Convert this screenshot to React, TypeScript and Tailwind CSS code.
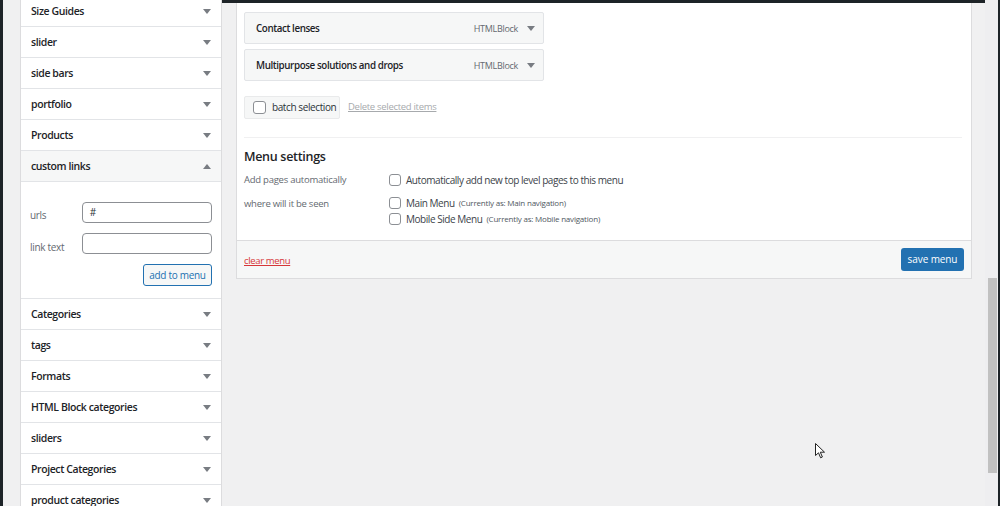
import React from "react";

const Caret = ({ up = false }: { up?: boolean }) => (
  <svg width="8" height="5" viewBox="0 0 8 5" className="shrink-0">
    {up ? <polygon points="0,5 8,5 4,0" fill="#787c82" /> : <polygon points="0,0 8,0 4,5" fill="#787c82" />}
  </svg>
);

const Box = ({ size = 12 }: { size?: number }) => (
  <span
    className="inline-block shrink-0 rounded-[3px] border border-[#8c8f94] bg-white"
    style={{ width: size, height: size }}
  />
);

const leftTop = ["Size Guides", "slider", "side bars", "portfolio", "Products"];
const leftBottom = ["Categories", "tags", "Formats", "HTML Block categories", "sliders", "Project Categories", "product categories"];

function LeftRow({ label }: { label: string }) {
  return (
    <div className="flex h-[31px] shrink-0 items-center justify-between border-b border-[#e2e4e7] pl-[10px] pr-[10px]">
      <span className="pt-[2px] text-[10.5px] font-semibold tracking-[-0.4px] text-[#1d2327]">{label}</span>
      <Caret />
    </div>
  );
}

function MenuItem({ title }: { title: string }) {
  return (
    <div className="flex h-[32px] w-[300px] items-center justify-between rounded-[2px] border border-[#e2e4e7] bg-[#f6f7f7] pl-[11px] pr-[8px]">
      <span className="pt-[2px] text-[9.8px] font-semibold tracking-[-0.4px] text-[#1d2327]">{title}</span>
      <div className="flex items-center gap-[9px]">
        <span className="pt-[1px] text-[9px] tracking-[-0.3px] text-[#646970]">HTMLBlock</span>
        <Caret />
      </div>
    </div>
  );
}

export default function App() {
  return (
    <div className="relative flex h-[506px] w-[1000px] overflow-hidden bg-[#f0f0f1] font-['Open_Sans','Noto_Sans',sans-serif]">
      <div className="w-[3px] shrink-0 bg-[#1d2327]" />
      <div className="w-[17px] shrink-0" />
      {/* left panel */}
      <div className="flex w-[202px] shrink-0 flex-col border-x border-[#dcdcde] bg-white">
        <div className="-mt-[4px] flex flex-col">
          {leftTop.map((l) => (
            <LeftRow key={l} label={l} />
          ))}
        </div>
        <div className="flex h-[31px] shrink-0 items-center justify-between border-b border-[#e2e4e7] bg-[#f6f7f7] px-[10px]">
          <span className="pt-[2px] text-[10.5px] font-semibold tracking-[-0.4px] text-[#1d2327]">custom links</span>
          <Caret up />
        </div>
        <div className="flex shrink-0 flex-col border-b border-[#e2e4e7] px-[9px] pb-[12px] pt-[20px]">
          <div className="flex h-[21px] items-center">
            <span className="w-[52px] pt-[6px] text-[10px] tracking-[-0.3px] text-[#646970]">urls</span>
            <div className="flex h-[21px] w-[131px] items-center rounded-[4px] border border-[#8c8f94] px-[7px] text-[10px] text-[#2c3338]">#</div>
          </div>
          <div className="mt-[10px] flex h-[21px] items-center">
            <span className="w-[52px] pt-[7px] text-[10px] tracking-[-0.3px] text-[#646970]">link text</span>
            <div className="h-[21px] w-[131px] rounded-[4px] border border-[#8c8f94]" />
          </div>
          <div className="mt-[10px] flex justify-end">
            <div className="flex h-[22px] w-[69px] items-center justify-center rounded-[3px] border border-[#2271b1] bg-[#f6f7f7] text-[10px] tracking-[-0.3px] text-[#2271b1]">
              add to menu
            </div>
          </div>
        </div>
        {leftBottom.map((l) => (
          <LeftRow key={l} label={l} />
        ))}
      </div>
      {/* right area */}
      <div className="flex flex-1 flex-col">
        <div className="h-[3px] shrink-0 bg-[#1d2327]" />
        <div className="flex flex-1 pl-[14px]">
          <div className="flex h-[276px] w-[736px] flex-col border-x border-b border-[#dcdcde] bg-white">
            <div className="flex flex-1 flex-col px-[7px] pt-[9px]">
              <div className="flex flex-col gap-[5px]">
                <MenuItem title="Contact lenses" />
                <MenuItem title="Multipurpose solutions and drops" />
              </div>
              <div className="mt-[15px] flex items-center">
                <div className="flex h-[23px] w-[96px] items-center gap-[6px] whitespace-nowrap rounded-[2px] border border-[#e9eaeb] bg-[#f6f7f7] px-[8px]">
                  <Box size={13} />
                  <span className="text-[10px] tracking-[-0.4px] text-[#2c3338]">batch selection</span>
                </div>
                <span className="ml-[8px] text-[9.5px] tracking-[-0.3px] text-[#a7aaad] underline">Delete selected items</span>
              </div>
              <div className="mr-[2px] mt-[18px] border-t border-[#f0f0f1]" />
              <div className="mt-[10px] text-[12.5px] font-semibold tracking-[-0.3px] text-[#1d2327]">Menu settings</div>
              <div className="mt-[6px] flex h-[15px] items-center">
                <span className="w-[145px] text-[9.5px] tracking-[-0.25px] text-[#646970]">Add pages automatically</span>
                <Box />
                <span className="ml-[5px] text-[10px] tracking-[-0.45px] text-[#3c434a]">Automatically add new top level pages to this menu</span>
              </div>
              <div className="mt-[8px] flex">
                <span className="w-[145px] text-[9.5px] leading-[15px] tracking-[-0.25px] text-[#646970]">where will it be seen</span>
                <div className="flex flex-col gap-[1px]">
                  <div className="flex h-[15px] items-center">
                    <Box />
                    <span className="ml-[5px] text-[10px] tracking-[-0.45px] text-[#3c434a]">Main Menu</span>
                    <span className="ml-[4px] text-[8px] tracking-[-0.2px] text-[#50575e]">(Currently as: Main navigation)</span>
                  </div>
                  <div className="flex h-[15px] items-center">
                    <Box />
                    <span className="ml-[5px] text-[10px] tracking-[-0.45px] text-[#3c434a]">Mobile Side Menu</span>
                    <span className="ml-[4px] text-[8px] tracking-[-0.2px] text-[#50575e]">(Currently as: Mobile navigation)</span>
                  </div>
                </div>
              </div>
            </div>
            <div className="flex h-[38px] shrink-0 items-center justify-between border-t border-[#dcdcde] bg-[#f6f7f7] pl-[7px] pr-[7px]">
              <span className="pt-[3px] text-[9.5px] tracking-[-0.35px] text-[#d63638] underline">clear menu</span>
              <div className="flex h-[23px] w-[63px] items-center justify-center rounded-[3px] bg-[#2271b1] text-[10px] tracking-[-0.1px] text-white">
                save menu
              </div>
            </div>
          </div>
        </div>
      </div>
      {/* scrollbar */}
      <div className="flex w-[13px] shrink-0 flex-col bg-[#eeeef0] pl-[3px] pr-[1px]">
        <div className="h-[278px]" />
        <div className="h-[195px] bg-[#c1c1c1]" />
      </div>
      <div className="w-[2px] shrink-0 bg-[#1d2327]" />
      {/* mouse cursor */}
      <svg className="absolute left-[815px] top-[443px]" width="11" height="16" viewBox="0 0 11 16">
        <path d="M0.5 0.5 L0.5 12.5 L3.5 9.8 L5.6 14.8 L7.4 14 L5.3 9.2 L9.5 9.2 Z" fill="white" stroke="#222" strokeWidth="1" strokeLinejoin="round" />
      </svg>
    </div>
  );
}
